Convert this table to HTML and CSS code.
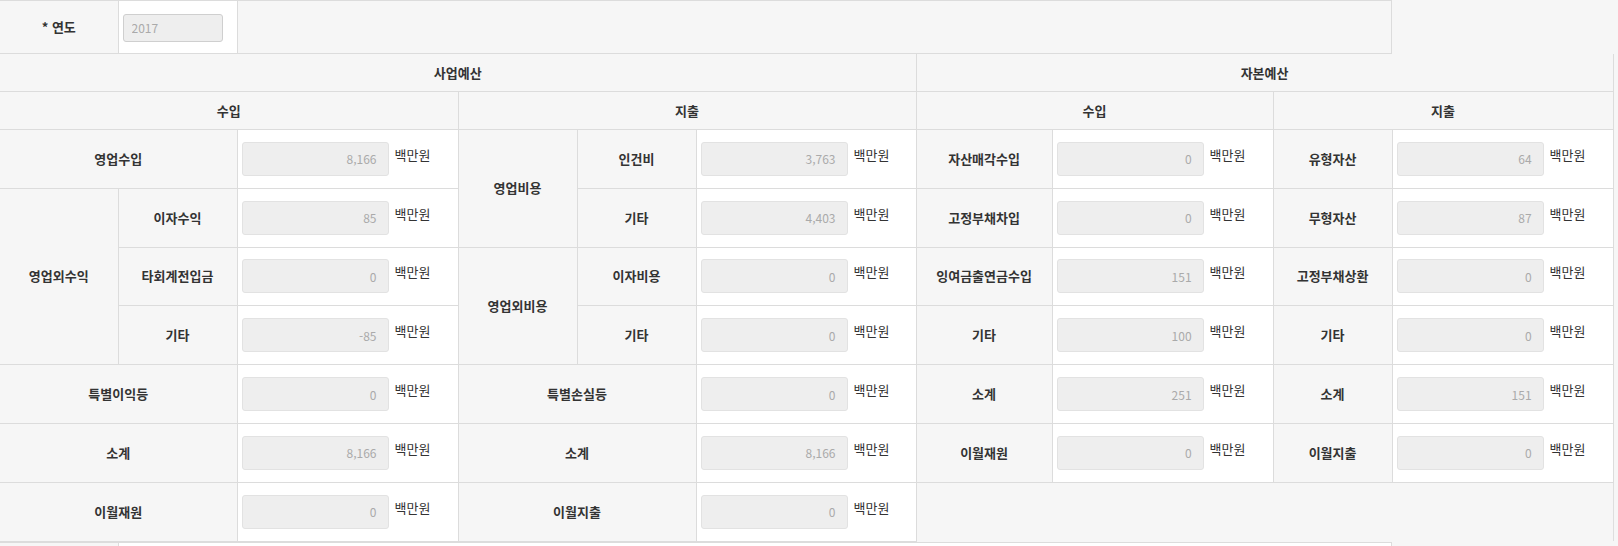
FILE: index.html
```html
<!DOCTYPE html>
<html lang="ko">
<head>
<meta charset="utf-8">
<title>예산</title>
<link rel="stylesheet" href="styles.css">
</head>
<body>
<div class="page">
  <table class="form-table year-table">
    <colgroup><col class="w118"><col class="w119"><col></colgroup>
    <tr class="year-row">
      <th>* 연도</th>
      <td class="val"><input class="year-input" value="2017" readonly></td>
      <td class="blank"></td>
    </tr>
  </table>

  <table class="budget">
    <colgroup>
      <col class="w118"><col class="w119"><col class="w221"><col class="w119"><col class="w119"><col class="w220"><col class="w136"><col class="w221"><col class="w119"><col class="w221">
    </colgroup>
    <tr class="head-row"><th colspan="6">사업예산</th><th colspan="4">자본예산</th></tr>
    <tr class="head-row"><th colspan="3">수입</th><th colspan="3">지출</th><th colspan="2">수입</th><th colspan="2">지출</th></tr>
    <tr class="data-row">
      <th colspan="2">영업수입</th>
      <td class="val"><div class="amt"><input class="num" value="8,166" readonly><span class="unit">백만원</span></div></td>
      <th rowspan="2">영업비용</th>
      <th>인건비</th>
      <td class="val"><div class="amt"><input class="num" value="3,763" readonly><span class="unit">백만원</span></div></td>
      <th>자산매각수입</th>
      <td class="val"><div class="amt"><input class="num" value="0" readonly><span class="unit">백만원</span></div></td>
      <th>유형자산</th>
      <td class="val"><div class="amt"><input class="num" value="64" readonly><span class="unit">백만원</span></div></td>
    </tr>
    <tr class="data-row">
      <th rowspan="3">영업외수익</th>
      <th>이자수익</th>
      <td class="val"><div class="amt"><input class="num" value="85" readonly><span class="unit">백만원</span></div></td>
      <th>기타</th>
      <td class="val"><div class="amt"><input class="num" value="4,403" readonly><span class="unit">백만원</span></div></td>
      <th>고정부채차입</th>
      <td class="val"><div class="amt"><input class="num" value="0" readonly><span class="unit">백만원</span></div></td>
      <th>무형자산</th>
      <td class="val"><div class="amt"><input class="num" value="87" readonly><span class="unit">백만원</span></div></td>
    </tr>
    <tr class="data-row">
      <th>타회계전입금</th>
      <td class="val"><div class="amt"><input class="num" value="0" readonly><span class="unit">백만원</span></div></td>
      <th rowspan="2">영업외비용</th>
      <th>이자비용</th>
      <td class="val"><div class="amt"><input class="num" value="0" readonly><span class="unit">백만원</span></div></td>
      <th>잉여금출연금수입</th>
      <td class="val"><div class="amt"><input class="num" value="151" readonly><span class="unit">백만원</span></div></td>
      <th>고정부채상환</th>
      <td class="val"><div class="amt"><input class="num" value="0" readonly><span class="unit">백만원</span></div></td>
    </tr>
    <tr class="data-row">
      <th>기타</th>
      <td class="val"><div class="amt"><input class="num" value="-85" readonly><span class="unit">백만원</span></div></td>
      <th>기타</th>
      <td class="val"><div class="amt"><input class="num" value="0" readonly><span class="unit">백만원</span></div></td>
      <th>기타</th>
      <td class="val"><div class="amt"><input class="num" value="100" readonly><span class="unit">백만원</span></div></td>
      <th>기타</th>
      <td class="val"><div class="amt"><input class="num" value="0" readonly><span class="unit">백만원</span></div></td>
    </tr>
    <tr class="data-row">
      <th colspan="2">특별이익등</th>
      <td class="val"><div class="amt"><input class="num" value="0" readonly><span class="unit">백만원</span></div></td>
      <th colspan="2">특별손실등</th>
      <td class="val"><div class="amt"><input class="num" value="0" readonly><span class="unit">백만원</span></div></td>
      <th>소계</th>
      <td class="val"><div class="amt"><input class="num" value="251" readonly><span class="unit">백만원</span></div></td>
      <th>소계</th>
      <td class="val"><div class="amt"><input class="num" value="151" readonly><span class="unit">백만원</span></div></td>
    </tr>
    <tr class="data-row">
      <th colspan="2">소계</th>
      <td class="val"><div class="amt"><input class="num" value="8,166" readonly><span class="unit">백만원</span></div></td>
      <th colspan="2">소계</th>
      <td class="val"><div class="amt"><input class="num" value="8,166" readonly><span class="unit">백만원</span></div></td>
      <th>이월재원</th>
      <td class="val"><div class="amt"><input class="num" value="0" readonly><span class="unit">백만원</span></div></td>
      <th>이월지출</th>
      <td class="val"><div class="amt"><input class="num" value="0" readonly><span class="unit">백만원</span></div></td>
    </tr>
    <tr class="data-row">
      <th colspan="2">이월재원</th>
      <td class="val"><div class="amt"><input class="num" value="0" readonly><span class="unit">백만원</span></div></td>
      <th colspan="2">이월지출</th>
      <td class="val"><div class="amt"><input class="num" value="0" readonly><span class="unit">백만원</span></div></td>
    </tr>
  </table>

  <table class="form-table year-table">
    <colgroup><col class="w118"><col></colgroup>
    <tr class="year-row">
      <th></th>
      <td class="val"></td>
    </tr>
  </table>
</div>
</body>
</html>
```
FILE: styles.css
```css
html, body {
  margin: 0;
  padding: 0;
  background: #f6f6f6;
}

body {
  font-family: "Noto Sans CJK KR", "Noto Sans", sans-serif;
  color: #333;
  font-size: 13px;
}

.page {
  width: 1618px;
  overflow: hidden;
}

table {
  border-collapse: collapse;
  table-layout: fixed;
  border-spacing: 0;
}

.year-table {
  width: 1392px;
}

.budget {
  width: 1613px;
  border-right: 1px solid #dedede;
}

.w118 { width: 118px; }
.w119 { width: 119px; }
.w136 { width: 136px; }
.w220 { width: 220px; }
.w221 { width: 221px; }

th, td {
  border: 1px solid #dcdcdc;
  padding: 0;
  font-size: 13px;
  line-height: 18px;
}

th {
  background: #f6f6f6;
  font-weight: 700;
  color: #333;
  text-align: center;
  vertical-align: middle;
}

td.val {
  background: #fff;
  padding: 0 4px;
  vertical-align: middle;
}

td.blank {
  background: #f6f6f6;
}

.budget tr:first-child th {
  border-top: none;
}

.budget tr th:first-child,
.year-table tr th:first-child {
  border-left: none;
}

.year-table tr:first-child th,
.year-table tr:first-child td {
  border-top: 1px solid #dcdcdc;
}

.year-row th,
.year-row td {
  height: 52px;
}

.head-row th {
  height: 37px;
}

.data-row th,
.data-row td {
  height: 57.8px;
}

.year-input {
  box-sizing: border-box;
  width: 100px;
  height: 28px;
  margin-top: 1px;
  border: 1px solid #cfcfcf;
  border-radius: 3px;
  background: #eeeeee;
  color: #aaa;
  font-family: "Noto Sans CJK KR", "Noto Sans", sans-serif;
  font-size: 12px;
  padding: 0 8px;
  display: block;
  outline: none;
}

.amt {
  display: flex;
  align-items: flex-start;
}

.num {
  box-sizing: border-box;
  width: 147px;
  height: 34px;
  border: 1px solid #e2e2e2;
  border-radius: 3px;
  background: #eeeeee;
  color: #aaa;
  font-family: "Noto Sans CJK KR", "Noto Sans", sans-serif;
  font-size: 12px;
  text-align: right;
  padding: 0 11px;
  outline: none;
  flex: none;
}

.unit {
  margin-left: 6px;
  line-height: 26px;
  font-size: 13px;
  color: #333;
  font-weight: 400;
  white-space: nowrap;
}
```
